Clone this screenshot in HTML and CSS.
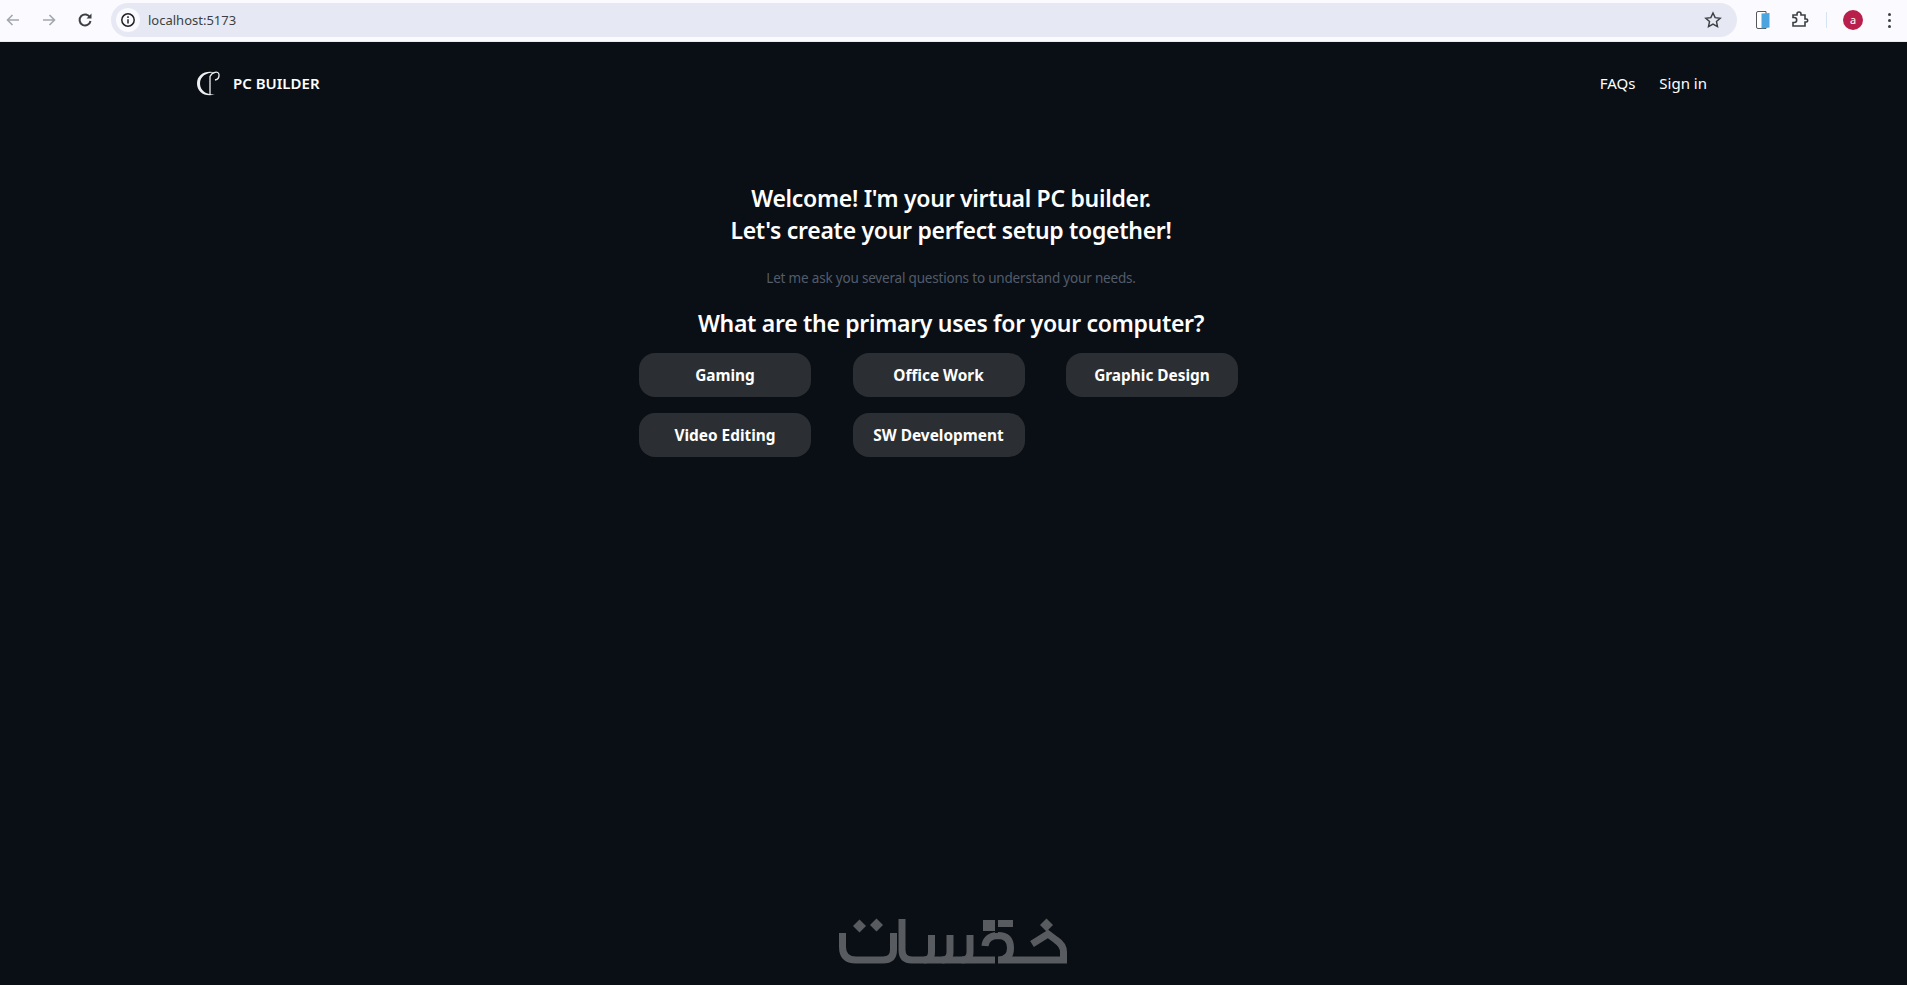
FILE: index.html
```html
<!DOCTYPE html>
<html lang="en">
<head>
    <meta charset="UTF-8">
    <meta name="viewport" content="width=device-width, initial-scale=1.0">
    <title>PC Builder</title>
    <link rel="stylesheet" href="styles.css">
</head>
<body>

<div class="browser-bar">
    <div class="browser-nav">
        <svg class="browser-icon faded" viewBox="0 0 16 16"><path d="M14 8H3M7.5 3 2.5 8l5 5"/></svg>
        <svg class="browser-icon faded" viewBox="0 0 16 16"><path d="M2 8h11M8.5 3l5 5-5 5"/></svg>
        <svg class="browser-icon reload" viewBox="0 0 16 16"><path d="M13 5.5A5.5 5.5 0 1 0 13.5 9"/><path class="solid" d="M9.5 6.5H14.5V1.5z"/></svg>
    </div>
    <div class="address">
        <div class="site-info">
            <svg viewBox="0 0 16 16"><circle cx="8" cy="8" r="6.2"/><path d="M8 7.2V11.5M8 4.3v1.6"/></svg>
        </div>
        <span class="url">localhost:5173</span>
        <svg class="star" viewBox="0 0 16 16"><path d="m8 1.8 1.9 4.1 4.5.5-3.3 3 .9 4.4L8 11.6l-4 2.2.9-4.4-3.3-3 4.500-.5z"/></svg>
    </div>
    <div class="browser-tools">
        <svg class="ext-one" viewBox="0 0 16 20">
            <path class="page-back" d="M3 1.5h8v17H3a1.5 1.5 0 0 1-1.5-1.5V3A1.5 1.5 0 0 1 3 1.5z"/>
            <path class="page-front" d="M6.5 3.500 14.5 3v14.5l-8 1z"/>
        </svg>
        <svg class="browser-icon puzzle" viewBox="0 0 18 18"><path d="M2 4h4V3a2 2 0 0 1 4 0v1h4v4h1.2a1.5 1.5 0 0 1 0 3H14v4H2v-3.5h1.2a2.5 2.5 0 0 0 0-5H2z"/></svg>
        <div class="divider"></div>
        <div class="avatar">a</div>
        <div class="dots"><i></i><i></i><i></i></div>
    </div>
</div>

<div class="page">
    <header class="topnav">
        <div class="brand">
            <svg class="brand-logo" viewBox="0 0 24 25">
                <path class="brand-c" d="M18 1.5C8-1 0 4 0 12.5S8 26.5 18 23.5C10 24 3 20 3 12.5S10 1 18 1.5z"/>
                <path class="brand-thin" d="M13 5V24M13 5.500C15 1 21.500-.5 22 3.500C22.300 6.500 20.500 8.500 18 9"/>
            </svg>
            <span>PC BUILDER</span>
        </div>
        <nav class="links">
            <a href="#">FAQs</a>
            <a href="#">Sign in</a>
        </nav>
    </header>

    <main class="intro">
        <h1>Welcome! I'm your virtual PC builder.<br>Let's create your perfect setup together!</h1>
        <p class="hint">Let me ask you several questions to understand your needs.</p>
        <h2>What are the primary uses for your computer?</h2>
        <div class="options">
            <button>Gaming</button>
            <button>Office Work</button>
            <button>Graphic Design</button>
            <button>Video Editing</button>
            <button>SW Development</button>
        </div>
    </main>
</div>

<!-- watermark logo -->
<svg class="watermark" viewBox="0 0 260 85" role="img" aria-label="watermark logo">
    <g class="wm-lines">
        <path d="M22.5 33V47Q22.5 60 36 60H63Q73.5 60 73.5 50V33"/>
        <path d="M82 19V50Q82 60 92 60H175"/>
        <path d="M111.5 35V52Q111.5 60 104 60"/>
        <path d="M130 35V52Q130 60 122 60"/>
        <path d="M150 35V52Q150 60 142 60"/>
        <path d="M163 23.5H193"/>
        <path d="M165 46Q166 36 178 35.5Q190.5 35.5 190.5 48Q190.5 60 178 60H243.5V52Q243.5 45 236 40L228 34 212 44"/>
    </g>
    <path class="wm-block" d="M163 20H175V31H163z"/>
    <path class="wm-slit" d="M176.500 16V33M176.500 52V68"/>
    <g class="wm-dots">
        <path d="M33 26 39.5 19.5 46 26 39.5 32.5z"/>
        <path d="M50 25 56.5 18.5 63 25 56.5 31.5z"/>
        <path d="M220 25 226.5 18.5 233 25 226.5 31.5z"/>
    </g>
</svg>

</body>
</html>
```
FILE: styles.css
```css
* {
    box-sizing: border-box;
}

html, body {
    height: 100%;
}

body {
    margin: 0;
    background-color: #0a0f15;
    font-family: "Noto Sans", "Open Sans", Arial, sans-serif;
    color: #fff;
    overflow: hidden;
    position: relative;
}

/* browser toolbar */
.browser-bar {
    height: 42px;
    background-color: #fafaff;
    border-bottom: 1px solid #e9eaf2;
    display: flex;
    align-items: center;
    padding-bottom: 1px;
}

.browser-nav {
    width: 111px;
    flex-shrink: 0;
    display: flex;
    align-items: center;
    gap: 20px;
    padding-left: 5px;
}

.browser-icon {
    width: 16px;
    height: 16px;
    fill: none;
    stroke: #3c4043;
    stroke-width: 1.6;
}

.browser-icon.faded {
    stroke: #a2a6ae;
}

.browser-icon.reload {
    stroke-width: 2;
}

.browser-icon .solid {
    fill: #3c4043;
    stroke: none;
}

.address {
    width: 1626px;
    height: 34px;
    flex-shrink: 0;
    background-color: #e6e9f3;
    border-radius: 17px;
    display: flex;
    align-items: center;
    padding: 0 15px 0 5px;
}

.site-info {
    width: 24px;
    height: 24px;
    border-radius: 50%;
    background-color: #fafaff;
    display: flex;
    align-items: center;
    justify-content: center;
}

.site-info svg {
    width: 16px;
    height: 16px;
    fill: none;
    stroke: #202124;
    stroke-width: 1.5;
}

.url {
    margin-left: 8px;
    font-size: 13px;
    color: #3c4043;
    flex: 1;
}

.star {
    width: 18px;
    height: 18px;
    fill: none;
    stroke: #3c4043;
    stroke-width: 1.3;
}

.browser-tools {
    flex: 1;
    display: flex;
    align-items: center;
    padding-left: 18px;
}

.ext-one {
    width: 16px;
    height: 20px;
}

.page-back {
    fill: #fff;
    stroke: #55595f;
    stroke-width: 1;
}

.page-front {
    fill: #4ba3e0;
}

.browser-icon.puzzle {
    width: 18px;
    height: 18px;
    margin-left: 20px;
}

.divider {
    width: 1px;
    height: 16px;
    margin-left: 17px;
    background-color: #d5e3f2;
}

.avatar {
    width: 20px;
    height: 20px;
    margin-left: 16px;
    border-radius: 50%;
    background-color: #b81f4a;
    color: #fff;
    font-size: 11px;
    line-height: 19px;
    text-align: center;
}

.dots {
    margin-left: 25px;
    display: flex;
    flex-direction: column;
    gap: 3px;
}

.dots i {
    display: block;
    width: 3px;
    height: 3px;
    border-radius: 50%;
    background-color: #3c4043;
}

/* page */
.page {
    width: 1512px;
    margin-left: 195px;
}

.topnav {
    height: 82px;
    display: flex;
    align-items: center;
    justify-content: space-between;
}

.brand {
    display: flex;
    align-items: center;
    gap: 12px;
    font-size: 15px;
    font-weight: 600;
}

.brand-logo {
    width: 24px;
    height: 25px;
    margin-left: 2px;
    overflow: visible;
}

.brand-c {
    fill: #eef0f2;
}

.brand-thin {
    fill: none;
    stroke: #eef0f2;
    stroke-width: 1.3;
}

.links {
    display: flex;
    gap: 24px;
}

.links a {
    color: #fff;
    text-decoration: none;
    font-size: 15px;
}

.intro {
    padding-top: 58px;
    text-align: center;
}

.intro h1, .intro h2 {
    margin: 0;
    font-size: 23px;
    line-height: 32px;
    font-weight: 600;
    letter-spacing: -0.3px;
}

.hint {
    margin: 22px 0 19px;
    font-size: 13.5px;
    line-height: 20px;
    letter-spacing: -0.19px;
    color: #535c6b;
}

.options {
    width: 624px;
    margin: 14px auto 0;
    display: grid;
    grid-template-columns: repeat(3, 172px);
    gap: 16px 41.5px;
}

.options button {
    height: 44px;
    border: none;
    border-radius: 16px;
    background-color: #2b2f33;
    color: #fff;
    font-family: inherit;
    font-size: 15.4px;
    font-weight: 700;
    cursor: pointer;
}

/* watermark, sits over the page near the bottom */
.watermark {
    position: absolute;
    left: 820px;
    top: 900px;
    width: 260px;
    height: 85px;
}

.wm-lines {
    fill: none;
    stroke: #585b5f;
    stroke-width: 7;
}

.wm-block {
    fill: #585b5f;
}

.wm-slit {
    fill: none;
    stroke: #0a0f15;
    stroke-width: 3;
}

.wm-dots {
    fill: #585b5f;
}
```
